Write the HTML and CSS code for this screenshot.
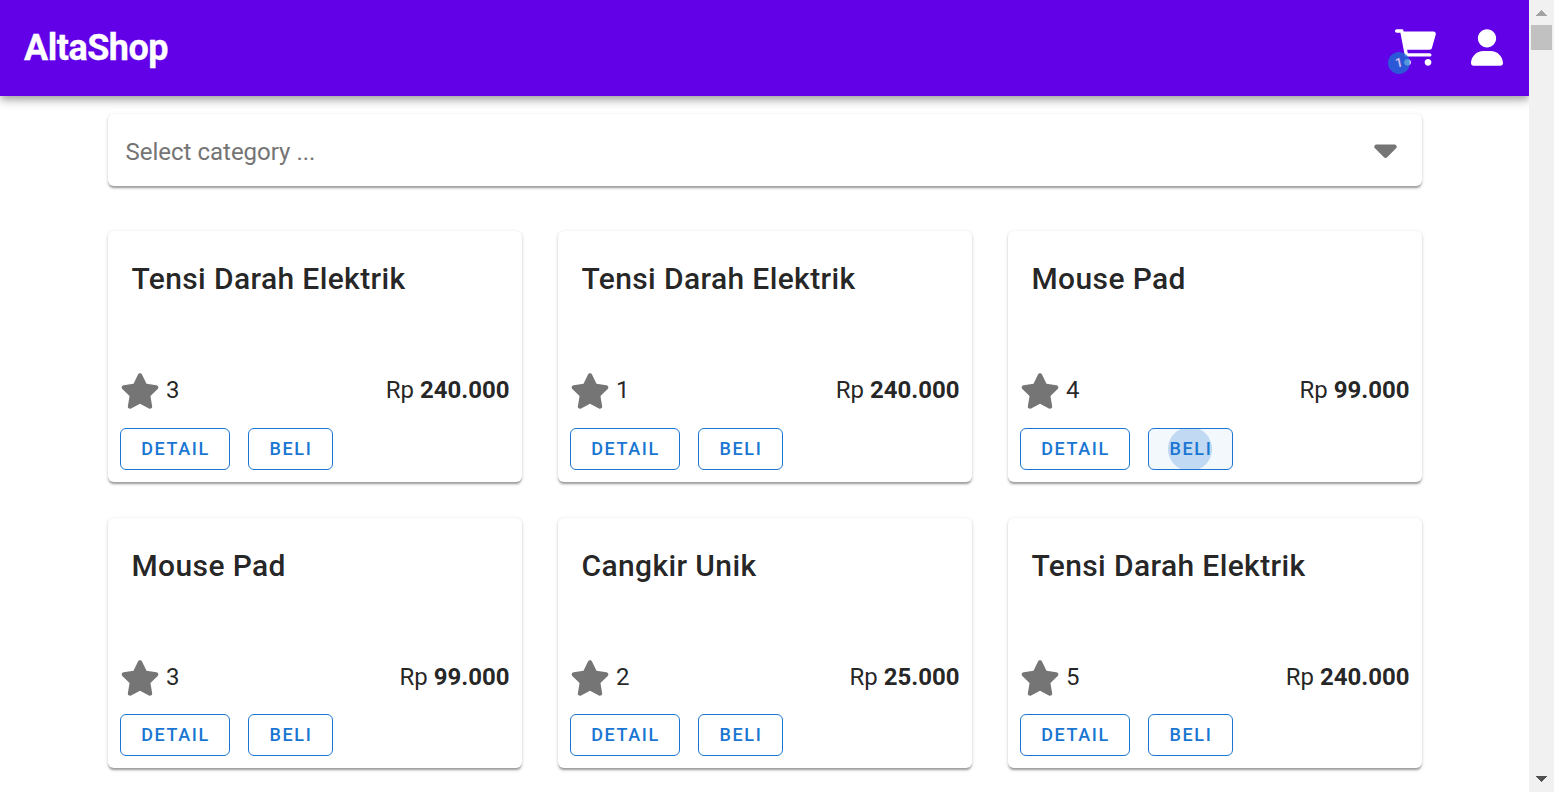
FILE: index.html
```html
<!DOCTYPE html>
<html lang="id">
<head>
<meta charset="utf-8">
<title>AltaShop</title>
<link rel="stylesheet" href="styles.css">
</head>
<body>
<svg class="sprite" aria-hidden="true">
  <symbol id="star" viewBox="0 0 576 512"><path d="M381.2 150.3L524.9 171.5C536.8 173.2 546.8 181.6 550.6 193.1C554.4 204.7 551.3 217.3 542.7 225.9L438.5 328.1L463.1 474.7C465.1 486.7 460.2 498.9 450.2 506C440.3 513.1 427.2 514 416.5 508.3L288.1 439.8L159.8 508.3C149 514 135.9 513.1 126 506C116.1 498.9 111.1 486.7 113.2 474.7L137.8 328.1L33.58 225.9C24.97 217.3 21.91 204.7 25.69 193.1C29.46 181.6 39.43 173.2 51.42 171.5L195 150.3L259.4 17.97C264.7 6.995 275.8 0 288.1 0C300.4 0 311.4 6.995 316.8 17.97L381.2 150.3z"/></symbol>
</svg>
<div class="window">
  <div class="page">
    <header class="bar">
      <h1 class="brand">AltaShop</h1>
      <div class="cart">
        <svg class="cart-icon" viewBox="0 0 576 512"><path d="M96 0C107.5 0 117.4 8.19 119.6 19.51L121.1 32H541.8C562.1 32 578.3 52.25 572.6 72.66L518.6 264.7C514.7 278.5 502.1 288 487.8 288H170.7L179.9 336H488C501.3 336 512 346.7 512 360C512 373.3 501.3 384 488 384H159.1C148.5 384 138.6 375.8 136.4 364.5L76.14 48H24C10.75 48 0 37.25 0 24C0 10.75 10.75 0 24 0H96zM128 464C128 437.5 149.5 416 176 416C202.5 416 224 437.5 224 464C224 490.5 202.5 512 176 512C149.5 512 128 490.5 128 464zM512 464C512 490.5 490.5 512 464 512C437.5 512 416 490.5 416 464C416 437.5 437.5 416 464 416C490.5 416 512 437.5 512 464z"/></svg>
        <span class="badge">1</span>
      </div>
      <svg class="user-icon" viewBox="0 0 448 512"><path d="M224 256c70.7 0 128-57.31 128-128s-57.3-128-128-128C153.3 0 96 57.31 96 128S153.3 256 224 256zM274.7 304H173.3C77.61 304 0 381.6 0 477.3c0 19.14 15.52 34.67 34.66 34.67h378.7C432.5 512 448 496.5 448 477.3C448 381.6 370.4 304 274.7 304z"/></svg>
    </header>
    <main class="content">
      <div class="select">
        <span>Select category ...</span>
        <svg class="caret" viewBox="0 0 320 512"><path d="M310.6 246.6l-127.1 128C176.4 380.9 168.2 384 160 384s-16.38-3.125-22.63-9.375l-127.1-128C.2244 237.5-2.516 223.7 2.438 211.8S19.07 192 32 192h255.1c12.94 0 24.62 7.781 29.58 19.75S319.8 237.5 310.6 246.6z"/></svg>
      </div>
      <div class="grid">
        <article class="card">
          <h2 class="title">Tensi Darah Elektrik</h2>
          <div class="info"><svg class="star"><use href="#star"/></svg><span>3</span><span class="price">Rp <b>240.000</b></span></div>
          <div class="actions"><button class="btn detail">DETAIL</button><button class="btn buy">BELI</button></div>
        </article>
        <article class="card">
          <h2 class="title">Tensi Darah Elektrik</h2>
          <div class="info"><svg class="star"><use href="#star"/></svg><span>1</span><span class="price">Rp <b>240.000</b></span></div>
          <div class="actions"><button class="btn detail">DETAIL</button><button class="btn buy">BELI</button></div>
        </article>
        <article class="card">
          <h2 class="title">Mouse Pad</h2>
          <div class="info"><svg class="star"><use href="#star"/></svg><span>4</span><span class="price">Rp <b>99.000</b></span></div>
          <div class="actions"><button class="btn detail">DETAIL</button><button class="btn buy pressed">BELI</button></div>
        </article>
        <article class="card">
          <h2 class="title">Mouse Pad</h2>
          <div class="info"><svg class="star"><use href="#star"/></svg><span>3</span><span class="price">Rp <b>99.000</b></span></div>
          <div class="actions"><button class="btn detail">DETAIL</button><button class="btn buy">BELI</button></div>
        </article>
        <article class="card">
          <h2 class="title">Cangkir Unik</h2>
          <div class="info"><svg class="star"><use href="#star"/></svg><span>2</span><span class="price">Rp <b>25.000</b></span></div>
          <div class="actions"><button class="btn detail">DETAIL</button><button class="btn buy">BELI</button></div>
        </article>
        <article class="card">
          <h2 class="title">Tensi Darah Elektrik</h2>
          <div class="info"><svg class="star"><use href="#star"/></svg><span>5</span><span class="price">Rp <b>240.000</b></span></div>
          <div class="actions"><button class="btn detail">DETAIL</button><button class="btn buy">BELI</button></div>
        </article>
      </div>
    </main>
  </div>
  <div class="scrollbar">
    <svg class="arrow up" viewBox="0 0 11 6" shape-rendering="crispEdges"><path d="M5.5 0L11 6H0z"/></svg>
    <div class="thumb"></div>
    <svg class="arrow down" viewBox="0 0 11 6" shape-rendering="crispEdges"><path d="M0 0h11L5.5 6z"/></svg>
  </div>
</div>
</body>
</html>
```
FILE: styles.css
```css
* { box-sizing: border-box; }
body { margin: 0; font-family: Roboto, sans-serif; color: rgba(0, 0, 0, .87); background: #fff; }
.sprite { display: none; }
.window { display: flex; height: 792px; overflow: hidden; }
.page { width: 1529px; overflow: hidden; }
.bar {
  display: flex; align-items: center; height: 96px; padding: 0 26px 1px 24px;
  background: #6200e8; color: #fff;
  box-shadow: 0 3px 6px -1.5px rgba(0,0,0,.2), 0 6px 7.5px 0 rgba(0,0,0,.14), 0 1.5px 15px 0 rgba(0,0,0,.12);
}
.brand { margin: 1px auto 0 0; font-size: 36px; font-weight: 700; line-height: 48px; letter-spacing: -.5px; -webkit-text-stroke: .3px #fff; }
.cart { position: relative; display: flex; margin-right: 35px; }
.cart-icon { width: 41px; height: 37px; fill: #fff; }
.badge {
  position: absolute; left: -7px; top: 23px; width: 22px; height: 22px; border-radius: 50%;
  background: #1976d2; opacity: .75; font-size: 13px; font-weight: 500; line-height: 22px; text-align: center;
  transform: rotate(-12deg);
}
.user-icon { width: 32px; height: 37px; fill: #fff; }
.content { padding: 18px 107px 0 108px; }
.select, .card {
  background: #fff; border-radius: 6px;
  box-shadow: 0 3px 2px -1.5px rgba(0,0,0,.2), 0 1.5px 2px 0 rgba(0,0,0,.14), 0 1.5px 4.5px 0 rgba(0,0,0,.12);
}
.select {
  display: flex; align-items: center; justify-content: space-between; height: 72px; margin-bottom: 45px;
  padding: 3px 25px 0 17.5px; font-size: 24px; color: #747474;
}
.caret { width: 23px; height: 36px; margin-bottom: 5px; fill: #757575; }
.grid { display: grid; grid-template-columns: repeat(3, 414px); gap: 36px; }
.card { height: 250.5px; padding: 12px; }
.title { margin: 12px 11.5px 0; font-size: 30px; font-weight: 500; line-height: 48px; letter-spacing: .375px; }
.info { display: flex; align-items: center; height: 36px; margin-top: 69px; font-size: 24px; line-height: 36px; }
.star { width: 40px; height: 36px; margin: 2.5px 6.5px 0 -.5px; fill: #757575; }
.price { margin-left: auto; padding-right: .5px; }
.price b { font-weight: 700; }
.actions { display: flex; gap: 18px; margin-top: 19.8px; }
.btn {
  height: 42px; padding: 0 0 0 1px; border: 1px solid #1976d2; border-radius: 6px; background: #fff; color: #1976d2;
  font: 500 18px/40px Roboto, sans-serif; letter-spacing: 1.607px;
}
.detail { width: 110px; }
.buy { width: 85px; }
.pressed { background: radial-gradient(circle at 41px 20px, #c1d9f2 21.5px, #f3f8fd 22.5px); }
.scrollbar { display: flex; flex-direction: column; align-items: center; width: 25px; background: #f1f1f1; }
.arrow { width: 11px; height: 6px; }
.up { margin: 10px 0 9px; fill: #a3a3a3; }
.thumb { width: 21px; height: 25px; background: #c1c1c1; }
.down { margin: auto 0 10px; fill: #505050; }
```
